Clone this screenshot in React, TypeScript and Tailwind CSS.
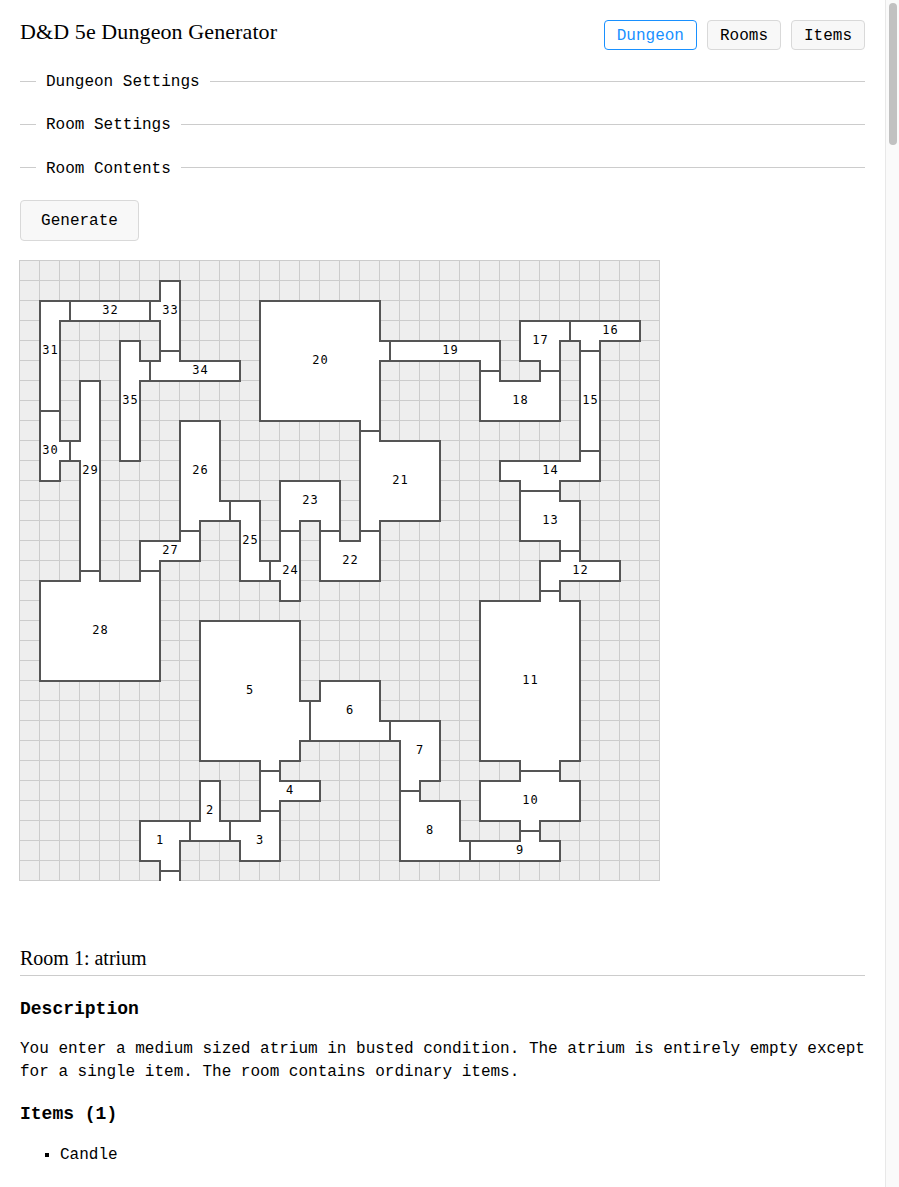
const mono = "[font-family:'Liberation_Mono','Courier_New',monospace]";

const outline: [number, number][] = [
  [7,1],[8,1],[8,5],[11,5],[11,6],[6,6],[6,10],[5,10],[5,4],[6,4],[6,5],[7,5],[7,3],[2,3],[2,9],[3,9],[3,6],[4,6],[4,16],[6,16],[6,14],[8,14],[8,8],[10,8],[10,12],[12,12],[12,15],[13,15],[13,11],[16,11],[16,14],[17,14],[17,8],[12,8],[12,2],[18,2],[18,4],[24,4],[24,6],[26,6],[26,5],[25,5],[25,3],[31,3],[31,4],[29,4],[29,11],[27,11],[27,12],[28,12],[28,15],[30,15],[30,16],[27,16],[27,17],[28,17],[28,25],[27,25],[27,26],[28,26],[28,28],[26,28],[26,29],[27,29],[27,30],[19,30],[19,24],[14,24],[14,25],[13,25],[13,26],[15,26],[15,27],[13,27],[13,30],[11,30],[11,29],[8,29],[8,32],[7,32],[7,30],[6,30],[6,28],[9,28],[9,26],[10,26],[10,28],[12,28],[12,25],[9,25],[9,18],[14,18],[14,22],[15,22],[15,21],[18,21],[18,23],[21,23],[21,26],[20,26],[20,27],[22,27],[22,29],[25,29],[25,28],[23,28],[23,26],[25,26],[25,25],[23,25],[23,17],[26,17],[26,15],[27,15],[27,14],[25,14],[25,11],[24,11],[24,10],[28,10],[28,4],[27,4],[27,8],[23,8],[23,5],[18,5],[18,9],[21,9],[21,13],[18,13],[18,16],[15,16],[15,13],[14,13],[14,17],[13,17],[13,16],[11,16],[11,13],[9,13],[9,15],[7,15],[7,21],[1,21],[1,16],[3,16],[3,10],[2,10],[2,11],[1,11],[1,2],[7,2],
];

const doors: [number, number, number, number][] = [
  [2.5,2,2.5,3],[6.5,2,6.5,3],[7,4.5,8,4.5],[6.5,5,6.5,6],[1,7.5,2,7.5],[2.5,9,2.5,10],[3,15.5,4,15.5],[6,15.5,7,15.5],
  [8,13.5,9,13.5],[10.5,12,10.5,13],[13,13.5,14,13.5],[12.5,15,12.5,16],[15,13.5,16,13.5],[17,13.5,18,13.5],[17,8.5,18,8.5],
  [18.5,4,18.5,5],[23,5.5,24,5.5],[26,5.5,27,5.5],[27.5,3,27.5,4],[28,4.5,29,4.5],[28,9.5,29,9.5],[25,11.5,27,11.5],
  [27,14.5,28,14.5],[26,16.5,27,16.5],[25,25.5,27,25.5],[25,28.5,26,28.5],[22.5,29,22.5,30],[19,26.5,20,26.5],[18.5,23,18.5,24],
  [14.5,22,14.5,24],[12,25.5,13,25.5],[12,27.5,13,27.5],[10.5,28,10.5,29],[8.5,28,8.5,29],[7,30.5,8,30.5],
];

const labels: [string, number, number][] = [
  ["1",160,840],["2",210,810],["3",260,840],["4",290,790],["5",250,690],["6",350,710],["7",420,750],["8",430,830],["9",520,850],
  ["10",530,800],["11",530,680],["12",580,570],["13",550,520],["14",550,470],["15",590,400],["16",610,330],["17",540,340],["18",520,400],
  ["19",450,350],["20",320,360],["21",400,480],["22",350,560],["23",310,500],["24",290,570],["25",250,540],["26",200,470],["27",170,550],
  ["28",100,630],["29",90,470],["30",50,450],["31",50,350],["32",110,310],["33",170,310],["34",200,370],["35",130,400],
];

const cols = Array.from({ length: 33 }, (_, i) => i);
const rows = Array.from({ length: 32 }, (_, i) => i);
const X = (c: number) => 20 + c * 20;
const Y = (r: number) => 261 + r * 20;

function DungeonMap() {
  return (
    <svg width={641} height={621} viewBox="19 260 641 621" className="block -ml-px">
      <rect x={19} y={260} width={641} height={621} fill="#eeeeee" />
      {cols.map((c) => (
        <rect key={c} x={X(c) - 1} y={260} width={1} height={621} fill="#cccccc" />
      ))}
      {rows.map((r) => (
        <rect key={r} x={19} y={Y(r) - 1} width={641} height={1} fill="#cccccc" />
      ))}
      <polygon
        points={outline.map(([c, r]) => `${X(c)},${Y(r)}`).join(" ")}
        fill="#ffffff"
        stroke="#555555"
        strokeWidth={2}
        strokeLinejoin="miter"
      />
      {doors.map(([a, b, c, d], i) => (
        <line key={i} x1={X(a)} y1={Y(b)} x2={X(c)} y2={Y(d)} stroke="#555555" strokeWidth={2} />
      ))}
      {labels.map(([t, x, y]) => (
        <text
          key={t}
          x={t.length > 1 ? x + 0.5 : x}
          y={y + 3.5}
          textAnchor="middle"
          fill="#000000"
          className="[font-family:'DejaVu_Sans_Mono',monospace] text-[12px] tracking-[1px]"
        >
          {t}
        </text>
      ))}
    </svg>
  );
}

function SectionDivider({ title, low }: { title: string; low?: boolean }) {
  return (
    <div className="flex h-[43px] items-center">
      <div className="h-px w-4 bg-[#cccccc]" />
      <span className={low ? "px-2.5 pt-[2px] text-base" : "px-2.5 text-base"}>{title}</span>
      <div className="h-px flex-1 bg-[#cccccc]" />
    </div>
  );
}

function NavButton({ label, active }: { label: string; active?: boolean }) {
  return (
    <button
      className={
        active
          ? "h-[30px] rounded border border-[#1890ff] bg-white px-3 pt-[2px] text-base text-[#1890ff]"
          : "h-[30px] rounded border border-[#d9d9d9] bg-[#f8f8f8] px-3 pt-[2px] text-base text-black"
      }
    >
      {label}
    </button>
  );
}

export default function App() {
  return (
    <div className={`flex h-[1187px] w-[899px] overflow-hidden bg-white text-black ${mono}`}>
      <main className="w-[885px] shrink-0 px-5 pt-5">
        <header className="flex h-[30px] items-center justify-between">
          <h1 className="[font-family:'Liberation_Serif',serif] -mt-[6px] text-[22px] leading-[30px] tracking-[0.1px]">
            D&amp;D 5e Dungeon Generator
          </h1>
          <nav className="flex gap-2.5">
            <NavButton label="Dungeon" active />
            <NavButton label="Rooms" />
            <NavButton label="Items" />
          </nav>
        </header>
        <div className="mt-2.5">
          <SectionDivider title="Dungeon Settings" />
          <SectionDivider title="Room Settings" />
          <SectionDivider title="Room Contents" low />
        </div>
        <button className="mt-[11px] h-[41px] w-[119px] rounded border border-[#d9d9d9] bg-[#f8f8f8] text-base">
          Generate
        </button>
        <div className="mt-[19px]">
          <DungeonMap />
        </div>
        <h2 className="mt-[64px] border-b border-[#cccccc] pb-1 [font-family:'Liberation_Serif',serif] text-[20px] leading-[26px]">
          Room 1: atrium
        </h2>
        <h3 className="mt-[22px] text-lg font-bold leading-[23px]">Description</h3>
        <p className="mt-[17px] text-base leading-[23px]">
          You enter a medium sized atrium in busted condition. The atrium is entirely empty except for a single item. The room contains ordinary items.
        </p>
        <h3 className="mt-[19px] text-lg font-bold leading-[23px]">Items (1)</h3>
        <ul className="mt-[18px] list-[square] pl-10 text-base leading-[23px]">
          <li>Candle</li>
        </ul>
      </main>
      <aside className="relative w-[14px] border-l border-[#e8e8e8] bg-[#fafafa]">
        <div className="absolute left-[3px] top-[3px] h-[142px] w-2 rounded-full bg-[#c1c1c1]" />
      </aside>
    </div>
  );
}
